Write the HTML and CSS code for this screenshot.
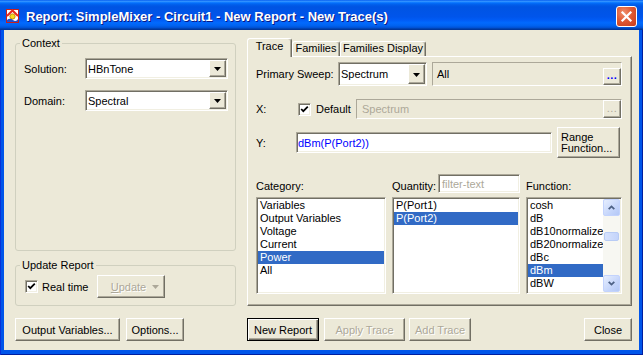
FILE: index.html
```html
<!DOCTYPE html>
<html lang="en">
<head>
<meta charset="UTF-8">
<title>Report: SimpleMixer - Circuit1 - New Report - New Trace(s)</title>
<link rel="stylesheet" href="styles.css">
</head>
<body>
<div class="window">
  <div class="titlebar">
    <svg class="app-icon" width="13" height="14" viewBox="0 0 13 14">
      <rect x="0.5" y="0.5" width="12" height="13" fill="#fff" stroke="#c8201c"/>
      <path d="M1 7 L6.5 1.5 L12 7" fill="none" stroke="#e8281c" stroke-width="2"/>
      <circle cx="6.5" cy="7.5" r="2.6" fill="#f8dc20" stroke="#c89000"/>
      <path d="M1 11 Q4 8.5 7 11 T12 10 L12 13 L1 13 Z" fill="#2050d0"/>
    </svg>
    <span class="title">Report: SimpleMixer - Circuit1 - New Report - New Trace(s)</span>
    <span class="close-btn">
      <svg width="13" height="13" viewBox="0 0 13 13"><path d="M2.5 2.5 L10.5 10.5 M10.5 2.5 L2.5 10.5" stroke="#fff" stroke-width="2.2" stroke-linecap="square"/></svg>
    </span>
  </div>

  <div class="client">
    <div class="left-col">
      <div class="group context">
        <span class="group-title">Context</span>
        <div class="form-row">
          <span class="row-label">Solution:</span>
          <div class="combo sunken">
            <span class="combo-text">HBnTone</span>
            <span class="combo-arrow raised"><svg width="7" height="4" viewBox="0 0 7 4"><path d="M0 0h7L3.5 4z"/></svg></span>
          </div>
        </div>
        <div class="form-row">
          <span class="row-label">Domain:</span>
          <div class="combo sunken">
            <span class="combo-text">Spectral</span>
            <span class="combo-arrow raised"><svg width="7" height="4" viewBox="0 0 7 4"><path d="M0 0h7L3.5 4z"/></svg></span>
          </div>
        </div>
      </div>

      <div class="group update">
        <span class="group-title">Update Report</span>
        <div class="update-row">
          <span class="checkbox sunken"><svg width="9" height="9" viewBox="0 0 9 9"><path d="M1.2 4 L3.3 6.2 L7.8 1.6" fill="none" stroke="#000" stroke-width="1.8"/></svg></span>
          <span class="check-label">Real time</span>
          <span class="btn raised disabled update-btn"><span><u>U</u>pdate</span><svg width="7" height="4" viewBox="0 0 7 4"><path d="M0 0h7L3.5 4z" fill="#ACA899"/></svg></span>
        </div>
      </div>
    </div>

    <div class="right-col">
      <div class="tabs">
        <span class="tab active tab-trace">Trace</span>
        <span class="tab tab-families">Families</span>
        <span class="tab tab-display">Families Display</span>
      </div>
      <div class="panel">
        <div class="sweep-row">
          <span class="sweep-label">Primary Sweep:</span>
          <div class="combo sunken sweep-combo">
            <span class="combo-text">Spectrum</span>
            <span class="combo-arrow raised"><svg width="7" height="4" viewBox="0 0 7 4"><path d="M0 0h7L3.5 4z"/></svg></span>
          </div>
          <div class="path-field">
            <span class="path-text">All</span>
            <span class="dots-btn raised">...</span>
          </div>
        </div>

        <div class="x-row">
          <span class="x-label">X:</span>
          <span class="checkbox sunken"><svg width="9" height="9" viewBox="0 0 9 9"><path d="M1.2 4 L3.3 6.2 L7.8 1.6" fill="none" stroke="#000" stroke-width="1.8"/></svg></span>
          <span class="default-label">Default</span>
          <div class="path-field x-field">
            <span class="path-text muted">Spectrum</span>
            <span class="dots-btn raised off">...</span>
          </div>
        </div>

        <div class="y-row">
          <span class="y-label">Y:</span>
          <div class="y-field sunken">dBm(P(Port2))</div>
          <span class="btn raised range-btn"><span>Range</span><span>Function...</span></span>
        </div>

        <div class="list-head">
          <span class="head-label">Category:</span>
          <div class="qty-head">
            <span class="head-label">Quantity:</span>
            <span class="filter-field sunken">filter-text</span>
          </div>
          <span class="head-label">Function:</span>
        </div>

        <div class="lists">
          <div class="listbox sunken">
            <div class="item">Variables</div>
            <div class="item">Output Variables</div>
            <div class="item">Voltage</div>
            <div class="item">Current</div>
            <div class="item sel">Power</div>
            <div class="item">All</div>
          </div>
          <div class="listbox sunken">
            <div class="item">P(Port1)</div>
            <div class="item sel">P(Port2)</div>
          </div>
          <div class="listbox sunken func-list">
            <div class="func-items">
              <div class="item">cosh</div>
              <div class="item">dB</div>
              <div class="item">dB10normalize</div>
              <div class="item">dB20normalize</div>
              <div class="item">dBc</div>
              <div class="item sel">dBm</div>
              <div class="item">dBW</div>
            </div>
            <div class="vscroll">
              <span class="sb-btn"><svg width="7" height="5" viewBox="0 0 7 5"><path d="M0.7 4.2 L3.5 1.4 L6.3 4.2" fill="none" stroke="#4D6185" stroke-width="1.8"/></svg></span>
              <span class="sb-track"><span class="sb-thumb"></span></span>
              <span class="sb-btn"><svg width="7" height="5" viewBox="0 0 7 5"><path d="M0.7 0.8 L3.5 3.6 L6.3 0.8" fill="none" stroke="#4D6185" stroke-width="1.8"/></svg></span>
            </div>
          </div>
        </div>
      </div>
    </div>

    <div class="btn-row">
      <span class="btn raised w-outvars">Output Variables...</span>
      <span class="btn raised w-options">Options...</span>
    </div>

    <div class="btn-row">
      <span class="btn default w-new">New Report</span>
      <span class="btn raised disabled w-apply">Apply Trace</span>
      <span class="btn raised disabled w-add">Add Trace</span>
      <span class="btn raised w-close">Close</span>
    </div>
  </div>
</div>
</body>
</html>
```

FILE: styles.css
```css
* { box-sizing: border-box; }
body { margin: 0; background: #fff; font-family: "Liberation Sans", Arial, sans-serif; font-size: 11px; color: #000; }

.window { width: 643px; height: 355px; display: flex; flex-direction: column; background: #0055EA; box-shadow: inset 1px 0 #0831D9, inset -1px 0 #001EA0, inset 0 -1px #001EA0; }

/* title bar */
.titlebar { flex: none; height: 30px; display: flex; align-items: center; padding: 2px 6px 0 6px; color: #fff;
  background: linear-gradient(#0058EE 0%, #3593FF 4%, #288EFF 6%, #127DFF 8%, #036FFC 10%, #0262EE 14%, #0057E5 20%, #0054E3 24%, #0055EB 56%, #005BF5 66%, #026AFE 76%, #0062EF 86%, #0052D6 92%, #0040AB 96%, #003092 100%); }
.app-icon { flex: none; margin-right: 7px; }
.title { font-weight: bold; font-size: 13px; white-space: nowrap; text-shadow: 1px 1px #0A1883; }
.close-btn { margin-left: auto; width: 21px; height: 21px; display: flex; align-items: center; justify-content: center; border: 1px solid #fff; border-radius: 3px;
  background: radial-gradient(circle at 35% 30%, #F0906C 0%, #E05A34 45%, #C73A1A 100%); }

/* dialog client area */
.client { flex: 1; margin: 0 4px 5px; background: #ECE9D8; display: grid; grid-template-columns: 221px 385px; grid-template-rows: 268px 23px; column-gap: 11px; row-gap: 12px; padding: 8px 7px 0 11px; }

.sunken { border: 1px solid; border-color: #ACA899 #fff #fff #ACA899; box-shadow: inset 1px 1px #716F64, inset -1px -1px #F1EFE2; padding: 1px; }
.raised { border: 1px solid; border-color: #fff #716F64 #716F64 #fff; box-shadow: inset -1px -1px #ACA899; background: #ECE9D8; }

.left-col { display: flex; flex-direction: column; padding-top: 5px; }
.group { position: relative; border: 1px solid #D0D0BF; border-radius: 3px; }
.group-title { position: absolute; top: -7px; left: 4px; padding: 0 2px; line-height: 13px; background: #ECE9D8; }
.context { height: 208px; padding: 14px 0 0 8px; }
.form-row { display: flex; align-items: center; height: 21px; }
.form-row + .form-row { margin-top: 11px; }
.row-label { width: 61px; }

.combo { display: flex; width: 143px; height: 21px; background: #fff; }
.combo-text { flex: 1; padding-left: 1px; display: flex; align-items: center; white-space: nowrap; }
.combo-arrow { width: 17px; display: flex; align-items: center; justify-content: center; }
.combo-arrow svg { margin-top: 1px; }

.update { margin-top: 14px; height: 41px; padding: 10px 0 0 9px; }
.update-row { display: flex; align-items: center; height: 21px; }
.checkbox { flex: none; width: 13px; height: 13px; background: #fff; display: flex; }
.check-label { margin-left: 4px; width: 55px; }
.update-btn { width: 68px; height: 21px; justify-content: flex-start; padding-left: 8px; gap: 6px; }

/* buttons */
.btn { display: flex; align-items: center; justify-content: center; height: 23px; white-space: nowrap; }
.btn.disabled { color: #ACA899; text-shadow: 1px 1px #fff; }
.btn.default { border: 1px solid #000; background: #ECE9D8; box-shadow: inset 1px 1px #fff, inset -1px -1px #716F64, inset -2px -2px #ACA899; }
.btn-row { display: flex; align-items: stretch; }
.w-outvars { width: 105px; }
.w-options { width: 58px; margin-left: 6px; }
.w-new { width: 72px; }
.w-apply { width: 81px; margin-left: 5px; }
.w-add { width: 62px; margin-left: 4px; }
.w-close { width: 48px; margin-left: auto; }

/* tabs */
.right-col { display: flex; flex-direction: column; }
.tabs { display: flex; align-items: flex-end; height: 18px; position: relative; z-index: 1; }
.tab { height: 15px; border: 1px solid; border-bottom: none; border-color: #fff #716F64 #fff #fff; border-radius: 3px 3px 0 0; box-shadow: inset -1px 0 #ACA899; line-height: 13px; text-align: center; background: #ECE9D8; }
.tab.active { height: 19px; margin-bottom: -1px; line-height: 14px; }
.tab-trace { width: 45px; }
.tab-families { width: 48px; }
.tab-display { width: 86px; }

.panel { height: 250px; border: 1px solid; border-color: #fff #716F64 #716F64 #fff; box-shadow: inset -1px -1px #ACA899; padding: 5px 9px 11px 8px; display: flex; flex-direction: column; }

.sweep-row { display: flex; height: 24px; }
.sweep-label { width: 82px; align-self: center; }
.sweep-combo { width: 89px; height: 24px; }
.path-field { flex: 1; margin-left: 5px; display: flex; justify-content: space-between; align-items: flex-end; border: 1px solid; border-color: #ACA899 #fff #fff #ACA899; }
.path-text { align-self: center; padding-left: 4px; padding-bottom: 1px; }
.path-text.muted { color: #ACA899; padding-left: 5px; }
.dots-btn { width: 18px; height: 17px; display: flex; justify-content: center; align-items: center; color: #0000FF; font-weight: bold; line-height: 8px; letter-spacing: 0.5px; padding-bottom: 3px; }
.dots-btn.off { color: #ACA899; font-weight: normal; height: 18px; }

.x-row { display: flex; align-items: center; height: 20px; margin-top: 13px; }
.x-label { width: 42px; }
.default-label { margin-left: 5px; width: 40px; }
.x-field { height: 20px; margin-left: 0; }

.y-row { display: flex; align-items: center; height: 31px; margin-top: 8px; }
.y-label { width: 40px; }
.y-field { width: 256px; height: 21px; background: #fff; color: #0000FF; display: flex; align-items: center; padding-left: 1px; }
.range-btn { margin-left: 5px; width: 63px; height: 31px; flex-direction: column; align-items: flex-start; padding-left: 3px; line-height: 11px; }

.list-head { display: grid; grid-template-columns: 130px 128px 1fr; column-gap: 6px; height: 19px; margin-top: 16px; }
.head-label { align-self: end; line-height: 13px; }
.qty-head { display: flex; justify-content: space-between; }
.filter-field { width: 82px; height: 19px; background: #fff; color: #ACA899; padding-left: 3px; display: flex; align-items: center; }

.lists { display: grid; grid-template-columns: 130px 128px 1fr; column-gap: 6px; height: 97px; margin-top: 4px; }
.listbox { background: #fff; overflow: hidden; }
.item { line-height: 13px; padding-left: 2px; white-space: nowrap; }
.item.sel { background: #316AC5; color: #fff; }
.func-list { display: flex; }
.func-items { flex: 1; overflow: hidden; }

.vscroll { width: 17px; display: flex; flex-direction: column; background: #F7F7F2; }
.sb-btn { height: 17px; display: flex; align-items: center; justify-content: center; border: 1px solid #C3D3FD; border-radius: 2px; background: linear-gradient(135deg, #E6EEFE 0%, #C6D6FB 60%, #B4C8F6 100%); }
.sb-track { flex: 1; padding: 16px 1px 0; }
.sb-thumb { display: block; height: 9px; border: 1px solid #B8CBF5; border-radius: 2px; background: linear-gradient(90deg, #D6E2FD, #C4D4FB); }
```
